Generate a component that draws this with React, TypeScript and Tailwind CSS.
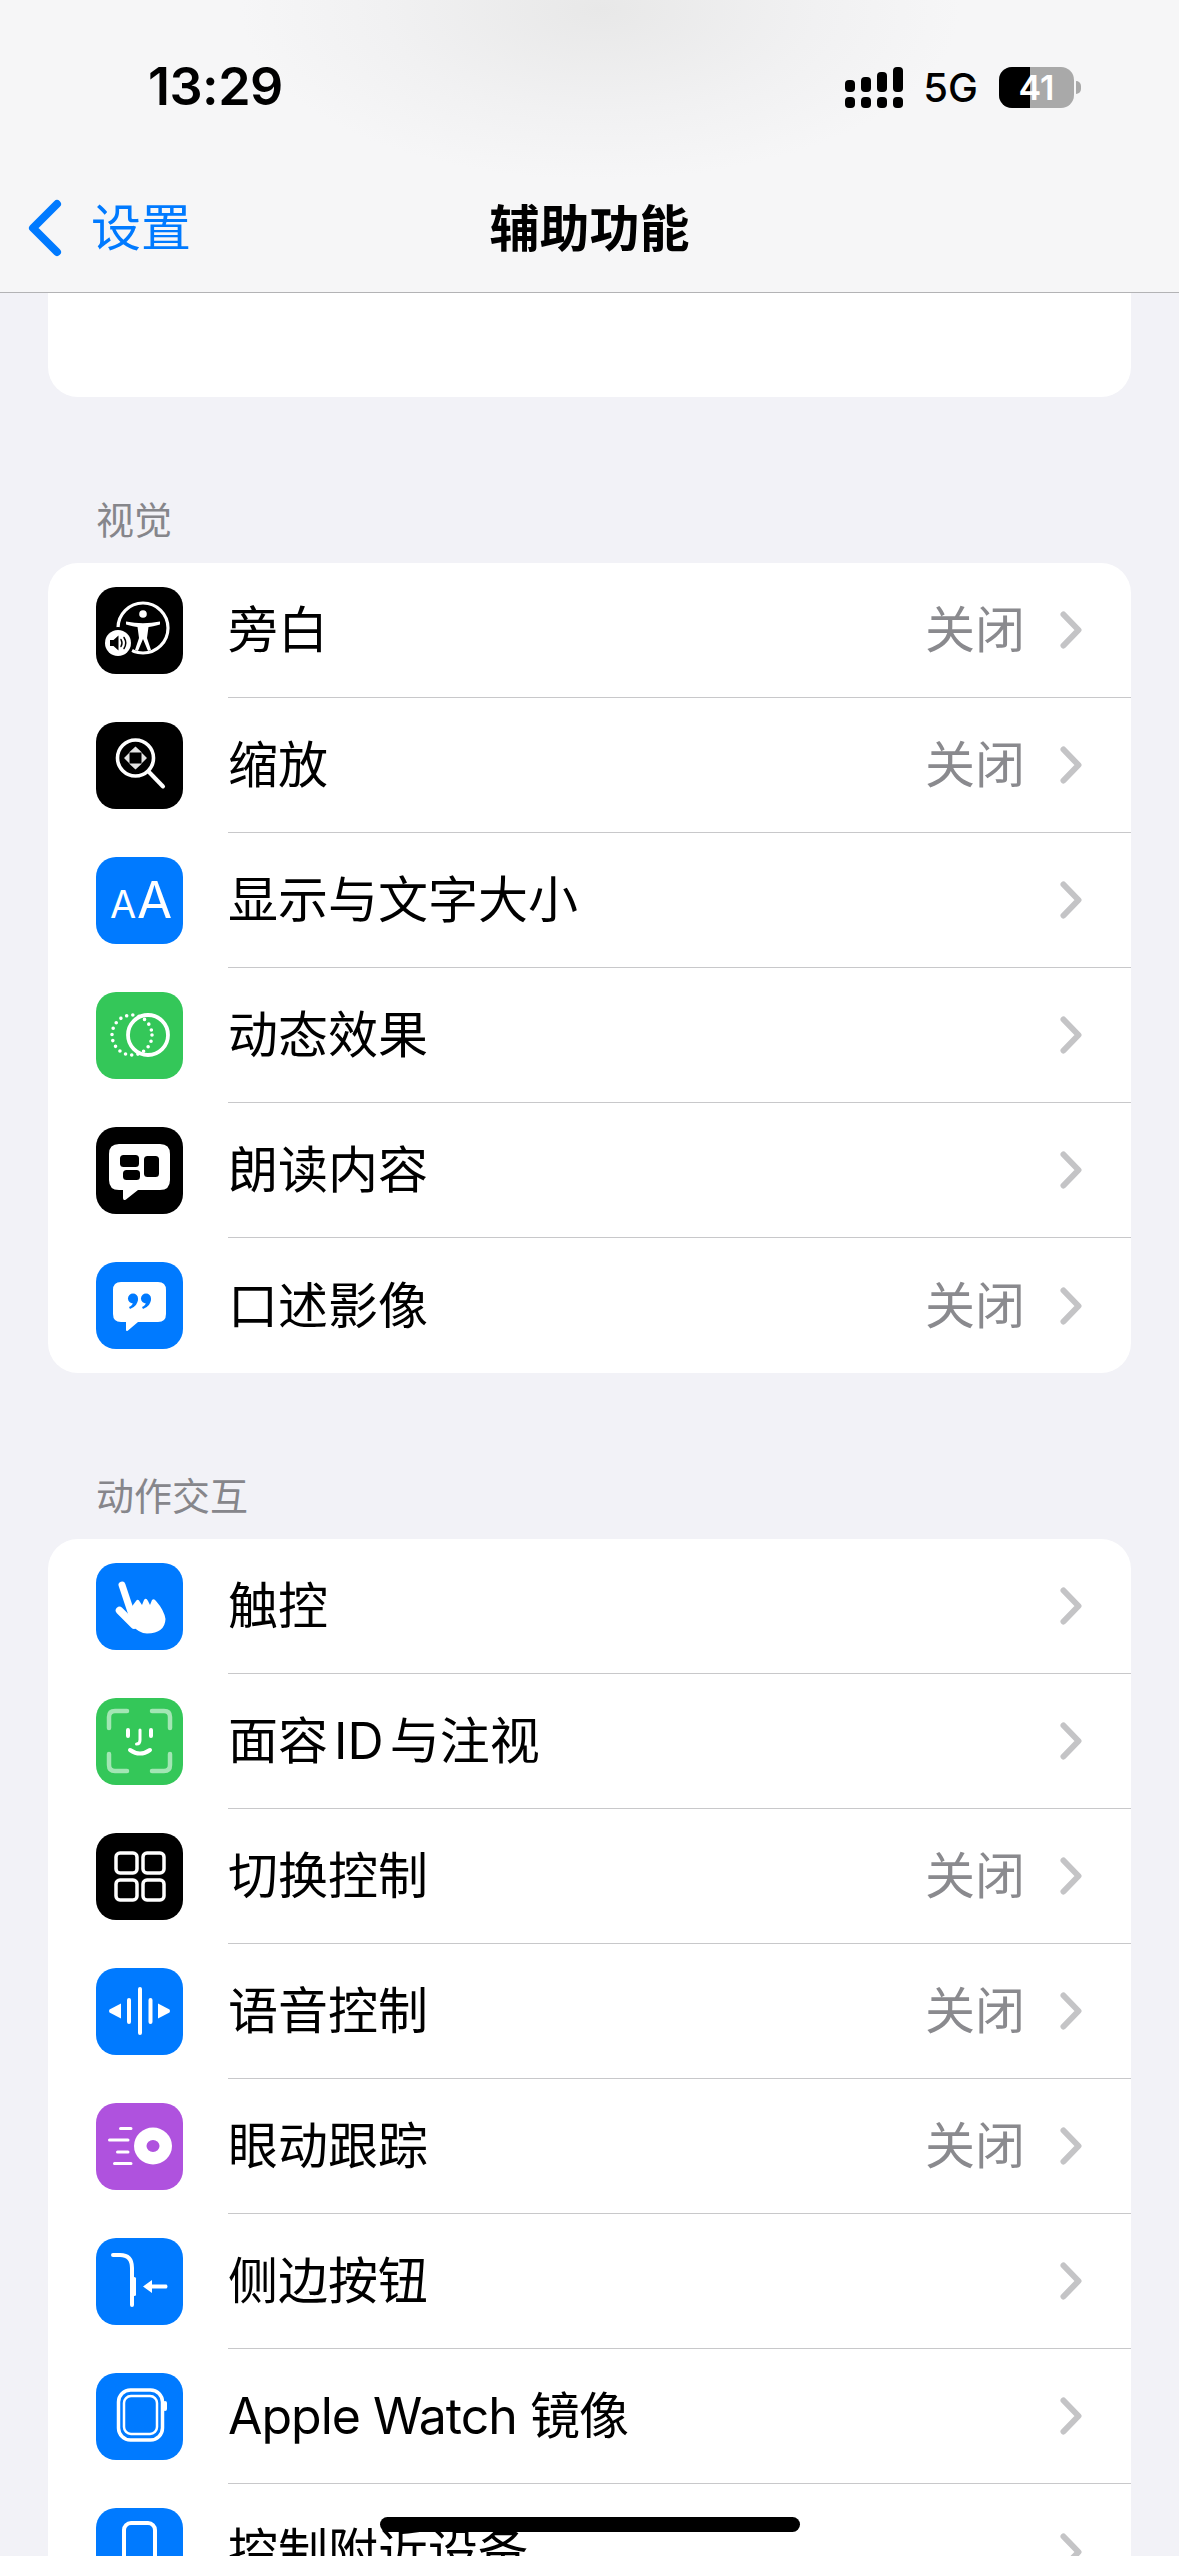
import type { ReactNode } from 'react'

const font = "font-['Inter','Noto_Sans_CJK_SC',sans-serif]"

type Row = {
  label: string
  labelClass?: string
  value?: string
  bg: string
  icon: ReactNode
}

function VoiceOverIcon() {
  return (
    <>
      <circle cx="47" cy="41" r="25" fill="none" stroke="#fff" strokeWidth="3.2" />
      <circle cx="47" cy="27" r="3.8" fill="#fff" />
      <path d="M30 34.5 Q47 38 64 34.5 L64 37.5 Q56 39.5 52.5 40 L51 51 L55 63 L52 64 L47 52 L42 64 L39 63 L43 51 L41.5 40 Q38 39.5 30 37.5Z" fill="#fff" />
      <circle cx="22" cy="56" r="16" fill="#000" />
      <circle cx="22" cy="56" r="13" fill="#fff" />
      <path d="M14 53h3.5l5-4.5v15l-5-4.5H14z" fill="#000" />
      <path d="M25 52.5q2 3.5 0 7M28 50.5q3.5 5.5 0 11" fill="none" stroke="#000" strokeWidth="1.5" strokeLinecap="round" />
    </>
  )
}

function ZoomIcon() {
  return (
    <>
      <circle cx="39.5" cy="36" r="18" fill="none" stroke="#fff" strokeWidth="3.6" />
      <path d="M53 50 L67 64.5" stroke="#fff" strokeWidth="4" strokeLinecap="round" />
      <path d="M39.5 24.5 L46 30.5H33zM39.5 47.5 L46 41.5H33zM28 36 L33.5 30.5V41.5zM51 36 L45.5 30.5V41.5z" fill="#e4e4e4" />
    </>
  )
}

function TextSizeIcon() {
  return (
    <>
      <text x="14" y="61" fill="#fff" fontSize="38" fontFamily="Inter, sans-serif">A</text>
      <text x="41" y="61" fill="#fff" fontSize="51" fontFamily="Inter, sans-serif">A</text>
    </>
  )
}

function MotionIcon() {
  return (
    <>
      <circle cx="36" cy="43" r="20" fill="none" stroke="#fff" strokeWidth="3.6" strokeLinecap="round" strokeDasharray="0 6.3" />
      <circle cx="52" cy="43" r="20" fill="none" stroke="#fff" strokeWidth="3.8" />
    </>
  )
}

function SpokenIcon() {
  return (
    <>
      <path d="M23 17H64Q74 17 74 27V53Q74 63 64 63H42L30 72.5Q27 74 27 71V63H23Q13 63 13 53V27Q13 17 23 17Z" fill="#fff" />
      <rect x="24" y="28" width="19" height="12" rx="3.5" fill="#000" />
      <rect x="27" y="43" width="17" height="10" rx="3.5" fill="#000" />
      <rect x="48" y="29" width="15" height="21" rx="3.5" fill="#000" />
    </>
  )
}

function AudioDescIcon() {
  return (
    <>
      <path d="M25 20H62Q70 20 70 28V52Q70 60 62 60H42L32 68.5Q30 70 30 67.5V60H25Q17 60 17 52V28Q17 20 25 20Z" fill="#fff" />
      <circle cx="37" cy="36.5" r="5" fill="#007aff" />
      <path d="M42 36.5Q42 44 34 47L33 45Q37.5 43 37 39Z" fill="#007aff" />
      <circle cx="50" cy="36.5" r="5" fill="#007aff" />
      <path d="M55 36.5Q55 44 47 47L46 45Q50.5 43 50 39Z" fill="#007aff" />
    </>
  )
}

function TouchIcon() {
  return (
    <>
      <path d="M26 22 L38 58" stroke="#fff" strokeWidth="7" strokeLinecap="round" />
      <path d="M23.5 47.5 L38 62" stroke="#fff" strokeWidth="7.5" strokeLinecap="round" />
      <path d="M34 46 L40 38 Q42 35 44 39 L46 42 L48 37 Q50 34 52 38 L54 42 L56 37 Q58 35 60 38 Q68 47 69.5 56 Q69 70 51 70.5 Q43 70.5 36 62Z" fill="#fff" />
    </>
  )
}

function FaceIdIcon() {
  return (
    <>
      <g fill="none" stroke="#fff" strokeOpacity="0.55" strokeWidth="4.5" strokeLinecap="round">
        <path d="M13 30V19Q13 13 19 13H31" />
        <path d="M56 13H68Q74 13 74 19V30" />
        <path d="M13 56V67Q13 73 19 73H31" />
        <path d="M56 73H68Q74 73 74 67V56" />
      </g>
      <g fill="none" stroke="#fff" strokeWidth="4" strokeLinecap="round">
        <path d="M32 32V38M55 32V38" />
        <path d="M44 32V42Q44 46 40.5 46" strokeWidth="3" />
        <path d="M34 52Q44 59 54 52" />
      </g>
    </>
  )
}

function SwitchIcon() {
  return (
    <g fill="none" stroke="#fff" strokeWidth="3.5">
      <rect x="20" y="20" width="21" height="20" rx="4" />
      <rect x="47" y="20" width="21" height="20" rx="4" />
      <rect x="20" y="47" width="21" height="20" rx="4" />
      <rect x="47" y="47" width="21" height="20" rx="4" />
    </g>
  )
}

function VoiceIcon() {
  return (
    <>
      <path d="M25 35.5V50.5L13.5 44.5Q12.5 43 13.5 41.5Z" fill="#fff" />
      <path d="M62 35.5V50.5L73.5 44.5Q74.5 43 73.5 41.5Z" fill="#fff" />
      <path d="M33 32V54M44 21V65M54.5 32V54" stroke="#fff" strokeWidth="4" strokeLinecap="round" />
    </>
  )
}

function EyeIcon() {
  return (
    <>
      <path d="M24.5 25.5H35M13.5 37H32M21.5 49H32M18.5 60.5H35" stroke="#fff" strokeWidth="3" strokeLinecap="round" />
      <ellipse cx="57" cy="43" rx="19" ry="18.5" fill="#fff" />
      <ellipse cx="57" cy="43" rx="6.5" ry="6" fill="#af52de" />
    </>
  )
}

function SideButtonIcon() {
  return (
    <>
      <path d="M17 17H24Q36 17 36 30V67" fill="none" stroke="#fff" strokeWidth="4" strokeLinecap="round" />
      <rect x="37" y="39" width="3" height="19" rx="1.5" fill="#fff" />
      <path d="M47 48.5L56 42V46.5H70.5Q72.5 48.5 70.5 50.5H56V55Z" fill="#fff" />
    </>
  )
}

function WatchIcon() {
  return (
    <>
      <rect x="22.5" y="17" width="44" height="50" rx="12" fill="none" stroke="#fff" strokeWidth="3.5" />
      <rect x="28" y="23" width="33" height="38" rx="7" fill="none" stroke="#fff" strokeWidth="2.5" />
      <rect x="67" y="28" width="4" height="10" rx="2" fill="#fff" />
    </>
  )
}

function NearbyIcon() {
  return <rect x="28" y="15" width="31" height="62" rx="7" fill="none" stroke="#fff" strokeWidth="4" />
}

const visionRows: Row[] = [
  { label: '旁白', value: '关闭', bg: 'bg-black', icon: <VoiceOverIcon /> },
  { label: '缩放', value: '关闭', bg: 'bg-black', icon: <ZoomIcon /> },
  { label: '显示与文字大小', bg: 'bg-[#007aff]', icon: <TextSizeIcon /> },
  { label: '动态效果', bg: 'bg-[#34c759]', icon: <MotionIcon /> },
  { label: '朗读内容', bg: 'bg-black', icon: <SpokenIcon /> },
  { label: '口述影像', value: '关闭', bg: 'bg-[#007aff]', icon: <AudioDescIcon /> },
]

const motorRows: Row[] = [
  { label: '触控', bg: 'bg-[#007aff]', icon: <TouchIcon /> },
  { label: '面容 ID 与注视', labelClass: '[word-spacing:-8px]', bg: 'bg-[#34c759]', icon: <FaceIdIcon /> },
  { label: '切换控制', value: '关闭', bg: 'bg-black', icon: <SwitchIcon /> },
  { label: '语音控制', value: '关闭', bg: 'bg-[#007aff]', icon: <VoiceIcon /> },
  { label: '眼动跟踪', value: '关闭', bg: 'bg-[#af52de]', icon: <EyeIcon /> },
  { label: '侧边按钮', bg: 'bg-[#007aff]', icon: <SideButtonIcon /> },
  { label: 'Apple Watch 镜像', labelClass: 'tracking-[-1px]', bg: 'bg-[#007aff]', icon: <WatchIcon /> },
  { label: '控制附近设备', bg: 'bg-[#007aff]', icon: <NearbyIcon /> },
]

function StatusBar() {
  return (
    <div className="flex h-[134px] items-end justify-between pb-[26px] pl-[148px] pr-[98px]">
      <span className="-mb-[5px] text-[52px] leading-none font-semibold tracking-[-0.5px] text-black">13:29</span>
      <div className="flex items-center">
        <svg width="58" height="41" viewBox="0 0 58 41" fill="#000">
          <rect x="0" y="13" width="10" height="12" rx="4" />
          <rect x="16" y="10" width="10" height="15" rx="4" />
          <rect x="32" y="5" width="10" height="20" rx="4" />
          <rect x="48" y="0" width="10" height="25" rx="4" />
          <rect x="0" y="30" width="10" height="11" rx="4" />
          <rect x="16" y="30" width="10" height="11" rx="4" />
          <rect x="32" y="30" width="10" height="11" rx="4" />
          <rect x="48" y="30" width="10" height="11" rx="4" />
        </svg>
        <span className="ml-[20px] text-[40px] leading-none font-medium text-black">5G</span>
        <div className="relative ml-[21px] flex h-[41px] w-[75px] items-center justify-center overflow-hidden rounded-[13px] bg-[#a9a9a9]">
          <div className="absolute inset-y-0 left-0 w-[31px] bg-black" />
          <span className="relative text-[34px] leading-none font-semibold text-white">41</span>
        </div>
        <div className="ml-[2px] h-[13px] w-[5px] rounded-r-full bg-[#a9a9a9]" />
      </div>
    </div>
  )
}

function NavBar() {
  return (
    <div className="relative flex h-[159px] items-start justify-center border-b border-[#b3b3b5] pt-[70px]">
      <div className="absolute top-[65px] left-[28px] flex items-center gap-[29px] text-[#007aff]">
        <svg width="34" height="58" viewBox="0 0 34 58" fill="none" stroke="currentColor" strokeWidth="8" strokeLinecap="round" strokeLinejoin="round">
          <path d="M29 5L5 29L29 53" />
        </svg>
        <span className="text-[50px] leading-none">设置</span>
      </div>
      <h1 className="text-[50px] leading-none font-semibold text-black">辅助功能</h1>
    </div>
  )
}

function SettingsRow({ row, last }: { row: Row; last: boolean }) {
  return (
    <div className="flex h-[135px] items-center pl-[48px]">
      <div className={`h-[87px] w-[87px] shrink-0 overflow-hidden rounded-[20px] ${row.bg}`}>
        <svg width="87" height="87" viewBox="0 0 87 87">
          {row.icon}
        </svg>
      </div>
      <div className={`ml-[45px] flex h-full min-w-0 flex-1 items-center justify-between pr-[49px] ${last ? '' : 'border-b border-[#c8c8ca]'}`}>
        <span className={`text-[50px] leading-none whitespace-nowrap text-black ${row.labelClass ?? ''}`}>{row.label}</span>
        <div className="flex items-center">
          {row.value && <span className="mr-[35px] text-[50px] leading-none text-[#8a8a8e]">{row.value}</span>}
          <svg width="22" height="38" viewBox="0 0 22 38" fill="none" stroke="#c4c4c6" strokeWidth="6" strokeLinecap="round" strokeLinejoin="round">
            <path d="M3.5 3.5L18.5 19L3.5 34.5" />
          </svg>
        </div>
      </div>
    </div>
  )
}

function Section({ title, rows }: { title: string; rows: Row[] }) {
  return (
    <section>
      <div className="flex h-[166px] items-end pb-[24px] pl-[96px]">
        <h2 className="text-[38px] leading-none text-[#86868b]">{title}</h2>
      </div>
      <div className="mx-[48px] overflow-hidden rounded-[30px] bg-white">
        {rows.map((row, index) => (
          <SettingsRow key={row.label} row={row} last={index === rows.length - 1} />
        ))}
      </div>
    </section>
  )
}

export default function App() {
  return (
    <div className={`relative h-[2556px] w-[1179px] overflow-hidden bg-[#f2f2f7] ${font}`}>
      <header className="bg-[radial-gradient(ellipse_360px_170px_at_600px_10px,#e8e8e8_0%,#f1f1f2_60%,#f6f6f7_100%)]">
        <StatusBar />
        <NavBar />
      </header>
      <div className="mx-[48px] h-[104px] rounded-b-[30px] bg-white" />
      <Section title="视觉" rows={visionRows} />
      <Section title="动作交互" rows={motorRows} />
      <div className="absolute top-[2517px] left-[380px] h-[15px] w-[420px] rounded-full bg-black" />
    </div>
  )
}
